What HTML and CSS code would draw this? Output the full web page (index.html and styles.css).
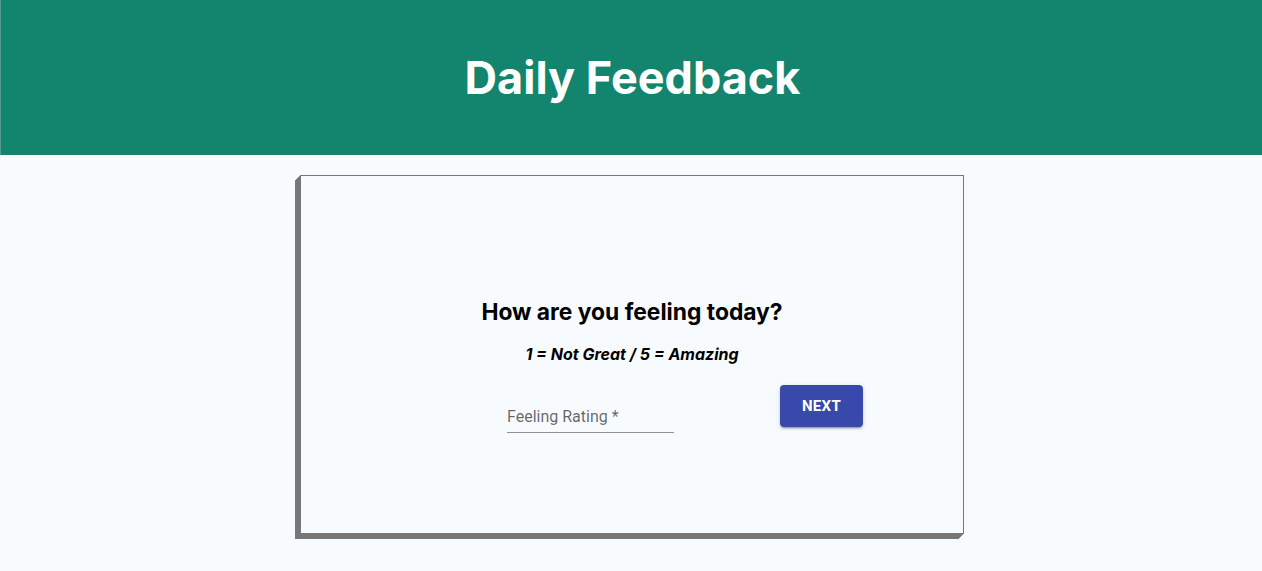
FILE: index.html
```html
<!DOCTYPE html>
<html lang="en">
<head>
<meta charset="utf-8">
<title>Daily Feedback</title>
<link rel="stylesheet" href="styles.css">
</head>
<body>
<header class="app-header">
  <h1 class="app-title">Daily Feedback</h1>
</header>
<main class="page">
  <section class="card">
    <h2 class="question">How are you feeling today?</h2>
    <p class="scale">1 = Not Great / 5 = Amazing</p>
    <div class="form-row">
      <label class="field">
        <span class="field-label">Feeling Rating *</span>
      </label>
      <button class="next-btn" type="button">NEXT</button>
    </div>
  </section>
</main>
</body>
</html>
```
FILE: styles.css
```css
html, body {
  margin: 0;
  padding: 0;
}
body {
  background: #f7fbfe;
  font-family: Inter, "Noto Sans", sans-serif;
  color: #000;
  min-height: 571px;
}
.app-header {
  height: 155px;
  background: #13846d;
  display: flex;
  align-items: center;
  justify-content: center;
  border-left: 1px solid #4f9f8e;
  box-sizing: border-box;
}
.app-title {
  margin: 0;
  color: #fff;
  font-size: 45px;
  font-weight: 700;
  padding-left: 2px;
}
.page {
  padding-top: 20px;
  display: flex;
  justify-content: center;
}
.card {
  box-sizing: border-box;
  width: 664px;
  height: 359px;
  margin-left: 2px;
  border: 1px solid #777;
  background: #f7fbfe;
  box-shadow: -1px 1px 0 #777, -2px 2px 0 #777, -3px 3px 0 #777, -4px 4px 0 #777, -5px 5px 0 #777;
  display: flex;
  flex-direction: column;
  align-items: center;
  padding-top: 122px;
}
.question {
  margin: 0;
  font-size: 22.8px;
  line-height: 27px;
  font-weight: 700;
}
.scale {
  margin: 19px 0 0;
  font-size: 16px;
  line-height: 20px;
  font-weight: 700;
  font-style: italic;
}
.form-row {
  margin-top: 21px;
  width: 356px;
  margin-left: 106px;
  display: flex;
  justify-content: space-between;
  align-items: flex-start;
}
.field {
  display: block;
  width: 167px;
  height: 48px;
  box-sizing: border-box;
  border-bottom: 1px solid rgba(0, 0, 0, 0.42);
  padding-top: 22px;
  font-family: Roboto, "Liberation Sans", sans-serif;
}
.field-label {
  font-size: 16px;
  line-height: 19px;
  color: rgba(0, 0, 0, 0.6);
}
.next-btn {
  width: 83px;
  height: 42px;
  border: none;
  border-radius: 4px;
  background: #3949ab;
  color: #fff;
  font-family: Roboto, "Liberation Sans", sans-serif;
  font-weight: 700;
  font-size: 15px;
  letter-spacing: 0.3px;
  box-shadow: 0 3px 1px -2px rgba(0,0,0,0.2), 0 2px 2px 0 rgba(0,0,0,0.14), 0 1px 5px 0 rgba(0,0,0,0.12);
  cursor: pointer;
}
```
